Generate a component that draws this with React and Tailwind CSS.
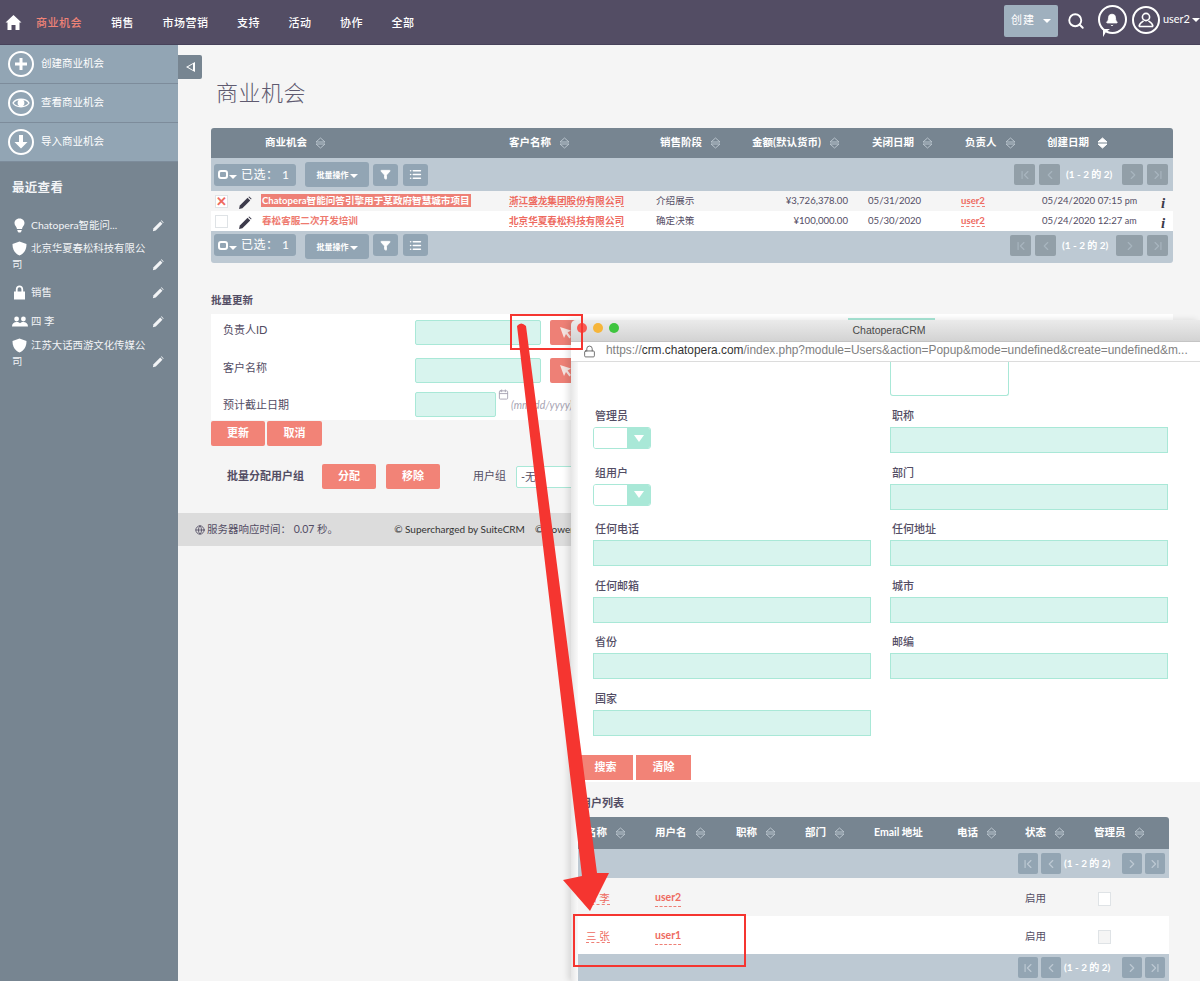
import { Search, Bell, Filter, List, ChevronLeft, ChevronRight, ChevronFirst, ChevronLast, Lock, Calendar, Globe } from 'lucide-react';

const NAV = ['销售', '市场营销', '支持', '活动', '协作', '全部'];

const COLS = 'grid grid-cols-[50px_248px_147px_80px_112px_113px_81px_118px_13px]';

function SortIcon({ active }) {
  return (
    <svg width="11" height="12" viewBox="0 0 11 12" className="inline-block shrink-0">
      <path d="M5.5 1 L10 5 H1 Z" fill={active ? '#fff' : 'none'} stroke={active ? '#fff' : '#b9c4cd'} strokeWidth="1" />
      <path d="M1 7 H10 L5.5 11 Z" fill={active ? '#fff' : 'none'} stroke={active ? '#fff' : '#b9c4cd'} strokeWidth="1" />
    </svg>
  );
}

function PencilIcon({ size = 14, color = '#3c3a4a' }) {
  return (
    <svg width={size} height={size} viewBox="0 0 14 14">
      <path d="M1 13 L1.8 9.6 L9.6 1.8 L12.2 4.4 L4.4 12.2 Z" fill={color} />
      <path d="M10.4 1 L11.2 0.4 L13.6 2.8 L13 3.6 Z" fill={color} />
    </svg>
  );
}

function CursorIcon() {
  return (
    <svg width="13" height="13" viewBox="0 0 13 13">
      <path d="M1 1 L12 4.5 L8.6 6.6 L12 11 L10.4 12.4 L7 8 L5 12 Z" fill="#f6e4e1" />
    </svg>
  );
}

function Caret({ className = '' }) {
  return <span className={`inline-block w-0 h-0 border-x-[4px] border-x-transparent border-t-[4px] border-t-white ${className}`} />;
}

function SideAction({ icon, label }) {
  return (
    <div className="h-[39px] flex items-center bg-[#92a5b4] border-b border-[#7d8c9b] pl-[8px]">
      <div className="w-[26px] h-[26px] rounded-full border-2 border-white flex items-center justify-center">
        {icon}
      </div>
      <span className="ml-[7px] text-[10.5px] text-white -mt-[1px]">{label}</span>
    </div>
  );
}

function Recent({ icon, label, wrap, className = '' }) {
  return (
    <div className={`relative text-[10.4px] leading-[16px] text-[#f2f4f6] pl-[12px] pr-[20px] ${className}`}>
      <div className="flex items-center h-[16px]">
        <span className="w-[19px] flex shrink-0">{icon}</span>
        <span className="whitespace-nowrap">{label}</span>
      </div>
      {wrap && <div>{wrap}</div>}
      <span className="absolute right-[14px] bottom-[1px]"><PencilIcon size={12} color="#f2f4f6" /></span>
    </div>
  );
}

const Shield = () => (
  <svg width="15" height="15" viewBox="0 0 15 15"><path d="M7.5 0.5 L14.5 3 C14.5 9 12 12.5 7.5 14.5 C3 12.5 0.5 9 0.5 3 Z" fill="#fff" /></svg>
);
const Bulb = () => (
  <svg width="13" height="15" viewBox="0 0 13 15" className="ml-[1px]"><path d="M6.5 0.5 C3 0.5 1.5 3 1.5 5 C1.5 7.5 3.6 8.5 4 11 H9 C9.4 8.5 11.5 7.5 11.5 5 C11.5 3 10 0.5 6.5 0.5 Z M4.4 12 H8.6 V13 L7.5 14.5 H5.5 L4.4 13 Z" fill="#fff" /></svg>
);
const LockSolid = () => (
  <svg width="13" height="15" viewBox="0 0 13 15" className="ml-[1px]"><path d="M1 6.5 H2.8 V4.5 C2.8 2 4.4 0.6 6.5 0.6 C8.6 0.6 10.2 2 10.2 4.5 V6.5 H12 V14.5 H1 Z M4.6 6.5 H8.4 V4.5 C8.4 3 7.6 2.2 6.5 2.2 C5.4 2.2 4.6 3 4.6 4.5 Z" fill="#fff" /></svg>
);
const People = () => (
  <svg width="16" height="11" viewBox="0 0 16 11"><circle cx="4.6" cy="3" r="2.4" fill="#fff" /><circle cx="11.4" cy="3" r="2.4" fill="#fff" /><path d="M0 10.5 C0 7.5 2 6 4.6 6 C6 6 7.2 6.4 8 7.2 C8.8 6.4 10 6 11.4 6 C14 6 16 7.5 16 10.5 Z" fill="#fff" /></svg>
);

function ToolBtn({ className = '', children }) {
  return <div className={`h-[22px] rounded-[3px] bg-[#92a5b4] flex items-center justify-center text-white ${className}`}>{children}</div>;
}

function PageBtn({ className = 'w-[21px]', children }) {
  return <div className={`h-[21px] rounded-[2px] bg-[#929fa8] flex items-center justify-center text-[#a8b5bf] ${className}`}>{children}</div>;
}

function Toolbar({ bottom }) {
  return (
    <div className={`flex bg-[#bdc9d3] pl-[3px] pr-[5px] ${bottom ? 'h-[32px] pt-[3px] items-start rounded-b-[3px]' : 'h-[33px] items-center'}`}>
      <ToolBtn className="w-[82px] text-[12px] gap-[4px] justify-start pl-[4px]">
        <span className="w-[10px] h-[9px] border-2 border-white rounded-[3px]" />
        <Caret className="-ml-[3px] mt-[5px]" />
        <span className="tracking-[0.5px] whitespace-nowrap">已选： 1</span>
      </ToolBtn>
      <ToolBtn className="!h-[25px] w-[64px] ml-[9px] text-[8px] gap-[1px] font-bold">批量操作<Caret className="mt-[2px]" /></ToolBtn>
      <ToolBtn className="w-[25px] ml-[4px]"><Filter size={11} fill="#fff" /></ToolBtn>
      <ToolBtn className="w-[25px] ml-[5px]"><List size={13} strokeWidth={3} /></ToolBtn>
      <div className={`ml-auto flex items-center ${bottom ? 'mt-[1px]' : ''}`}>
        <PageBtn><ChevronFirst size={14} /></PageBtn>
        <PageBtn className="w-[21px] ml-[4px]"><ChevronLeft size={14} /></PageBtn>
        <span className={`ml-[6px] w-[47px] text-[10px] font-bold text-white whitespace-nowrap ${bottom ? 'mr-[7px]' : 'mr-[9px]'}`}>(1 - 2 的 2)</span>
        <PageBtn className={bottom ? 'w-[27px]' : 'w-[21px]'}><ChevronRight size={14} /></PageBtn>
        <PageBtn className="w-[21px] ml-[4px]"><ChevronLast size={14} /></PageBtn>
      </div>
    </div>
  );
}

function Head({ label, className = '', active }) {
  return (
    <div className={`flex items-center gap-[8px] whitespace-nowrap ${className}`}>
      <span>{label}</span>
      <SortIcon active={active} />
    </div>
  );
}

function DataRow({ striped, checked, title, customer, stage, amount, closes, created, unit }) {
  return (
    <div className={`${COLS} h-[20px] items-center pt-[1px] text-[9.6px] text-[#534d64] ${striped ? 'bg-[#f5f5f5]' : 'bg-white'}`}>
      <div className="flex items-center pl-[4px]">
        <span className="w-[13px] h-[13px] border border-[#dfe3e6] bg-white flex items-center justify-center text-[#ee6a5f] text-[13px] font-bold leading-none">{checked ? '✕' : ''}</span>
        <span className="ml-[10px] mt-[3px]"><PencilIcon /></span>
      </div>
      <div className="whitespace-nowrap">
        {checked ? (
          <span className="bg-[#ee8076] text-white font-bold px-[1px] py-[1px]">{title}</span>
        ) : (
          <span className="text-[#ee7a6f] font-bold px-[1px]">{title}</span>
        )}
      </div>
      <div><span className="text-[#ee6a5f] font-bold border-b border-dashed border-[#ee8076]">{customer}</span></div>
      <div>{stage}</div>
      <div className="text-right">{amount}</div>
      <div className="pl-[20px]">{closes}</div>
      <div><span className="text-[#ee6a5f] font-bold border-b border-dashed border-[#ee8076]">user2</span></div>
      <div className="whitespace-nowrap">{created} <span className="text-[9px]">{unit}</span></div>
      <div className="pl-[1px] mt-[4px] text-[15px] font-bold italic leading-none text-[#3c3a4a] [font-family:'Liberation_Serif',serif]">i</div>
    </div>
  );
}

function FormField({ label }) {
  return (
    <div className="h-[56.6px]">
      <div className="pt-[1px] text-[11px] leading-[14px] font-medium text-[#534d64] pl-[2px]">{label}</div>
      <div className="mt-[4px] h-[26px] bg-[#d8f4ee] border border-[#a9e8d7]" />
    </div>
  );
}

function YesNo({ label }) {
  return (
    <div className="h-[56.6px]">
      <div className="pt-[1px] text-[11px] leading-[14px] font-medium text-[#534d64] pl-[2px]">{label}</div>
      <div className="mt-[4px] flex w-[58px] h-[22px] rounded-[3px] border border-[#a9e8d7] overflow-hidden">
        <div className="flex-1 bg-white" />
        <div className="w-[23px] bg-[#a9e8d7] flex items-center justify-center">
          <span className="w-0 h-0 border-x-[5px] border-x-transparent border-t-[7px] border-t-white" />
        </div>
      </div>
    </div>
  );
}

function PopupPager() {
  return (
    <div className="flex items-center justify-end h-full pr-[4px]">
      <PageBtn className="w-[20px] !bg-[#93a5b3] !text-[#bdc9d3]"><ChevronFirst size={14} /></PageBtn>
      <PageBtn className="w-[20px] ml-[3px] !bg-[#93a5b3] !text-[#bdc9d3]"><ChevronLeft size={14} /></PageBtn>
      <span className="ml-[3px] mr-[9px] w-[49px] text-[10px] font-bold text-white whitespace-nowrap">(1 - 2 的 2)</span>
      <PageBtn className="w-[20px] !bg-[#93a5b3] !text-[#bdc9d3]"><ChevronRight size={14} /></PageBtn>
      <PageBtn className="w-[20px] ml-[3px] !bg-[#93a5b3] !text-[#bdc9d3]"><ChevronLast size={14} /></PageBtn>
    </div>
  );
}

function UserRow({ name, user, striped, boxed }) {
  return (
    <div className={`h-[38px] flex items-center pt-[3px] text-[10.5px] ${striped ? 'bg-[#f5f5f5]' : 'bg-white'}`}>
      <span className="ml-[8px] w-[69px] text-[#ee6a5f]"><span className="border-b border-dashed border-[#ee8076]">{name}</span></span>
      <span className="text-[#ee6a5f] font-bold border-b border-dashed border-[#ee8076]">{user}</span>
      <span className="ml-auto w-[73px] text-[#534d64]">启用</span>
      <span className={`mr-[58px] w-[13px] h-[14px] border border-[#dfe3e6] ${boxed ? 'bg-[#f5f5f5]' : 'bg-white'}`} />
    </div>
  );
}

function PopupWindow() {
  return (
    <div className="absolute left-[571px] top-[320px] w-[629px] h-[661px] flex flex-col shadow-[-3px_0_6px_rgba(0,0,0,0.12)] rounded-tl-[5px] overflow-hidden">
      <div className="h-[22px] shrink-0 bg-gradient-to-b from-[#ebebeb] to-[#d3d3d3] border-b border-[#c4c4c4] relative flex items-center justify-center">
        <div className="absolute left-[6px] top-[3px] flex gap-[6px]">
          <span className="w-[10px] h-[10px] rounded-full bg-[#f85a52]" />
          <span className="w-[10px] h-[10px] rounded-full bg-[#f6b53a]" />
          <span className="w-[10px] h-[10px] rounded-full bg-[#3fc53f]" />
        </div>
        <span className="ml-[7px] text-[10.5px] text-[#4a4a4a] [font-family:'Liberation_Sans',sans-serif]">ChatoperaCRM</span>
      </div>
      <div className="h-[20px] shrink-0 bg-white border-b border-[#dcdcdc] flex items-center pl-[12px] pb-[1px] text-[11.9px] text-[#808080] whitespace-nowrap overflow-hidden [font-family:'Liberation_Sans',sans-serif]">
        <Lock size={13} strokeWidth={1.5} className="text-[#555] shrink-0" />
        <span className="ml-[10px]">https://<span className="text-[#333]">crm.chatopera.com</span>/index.php?module=Users&amp;action=Popup&amp;mode=undefined&amp;create=undefined&amp;m...</span>
      </div>
      <div className="flex-1 flex min-h-0">
        <div className="w-[7px] shrink-0 bg-gradient-to-r from-[#e6e6e6] to-[#fafafa]" />
        <div className="flex-1 flex flex-col min-w-0">
          <div className="h-[420px] shrink-0 bg-white pl-[15px] pr-[32px]">
            <div className="h-[34px] ml-[297px] w-[119px] border border-t-0 border-[#a9e8d7] rounded-b-[3px]" />
            <div className="grid grid-cols-[278px_278px] gap-x-[19px] mt-[12px]">
              <YesNo label="管理员" />
              <FormField label="职称" />
              <YesNo label="组用户" />
              <FormField label="部门" />
              <FormField label="任何电话" />
              <FormField label="任何地址" />
              <FormField label="任何邮箱" />
              <FormField label="城市" />
              <FormField label="省份" />
              <FormField label="邮编" />
              <FormField label="国家" />
            </div>
            <div className="flex gap-[3px] -ml-[15px] mt-[7px]">
              <button className="w-[55px] h-[25px] bg-[#f28377] text-white text-[11px] font-bold">搜索</button>
              <button className="w-[55px] h-[25px] bg-[#f28377] text-white text-[11px] font-bold">清除</button>
            </div>
          </div>
          <div className="flex-1 bg-[#f5f5f5] pr-[31px]">
            <div className="h-[35px] pt-[14px] pl-[2px] text-[11px] leading-[14px] font-bold text-[#534d64]">用户列表</div>
            <div className="h-[32px] bg-[#778591] rounded-t-[3px] text-white text-[10.5px] font-bold relative flex items-center">
              <Head label="名称" className="ml-[8px] w-[69px]" />
              <Head label="用户名" className="w-[81px]" />
              <Head label="职称" className="w-[69px]" />
              <Head label="部门" className="w-[69px]" />
              <span className="w-[83px] whitespace-nowrap">Email 地址</span>
              <Head label="电话" className="w-[68px]" />
              <Head label="状态" className="w-[69px]" />
              <Head label="管理员" />
            </div>
            <div className="h-[29px] bg-[#bdc9d3]"><PopupPager /></div>
            <UserRow name="四 李" user="user2" striped />
            <UserRow name="三 张" user="user1" boxed />
            <div className="h-[27px] bg-[#bdc9d3]"><PopupPager /></div>
          </div>
        </div>
      </div>
    </div>
  );
}

function Annotations() {
  return (
    <>
      <svg width="1200" height="981" viewBox="0 0 1200 981" className="absolute left-0 top-0 pointer-events-none">
        <path d="M517 326 Q521 321 526 326 L597 873 L609 873 L590 911 L563 880 L582 876 Z" fill="#f53530" />
      </svg>
      <div className="absolute left-[510px] top-[314px] w-[73px] h-[36px] border-2 border-[#f53530] pointer-events-none" />
      <div className="absolute left-[573px] top-[914px] w-[173px] h-[53px] border-2 border-[#f53530] pointer-events-none" />
    </>
  );
}

export default function App() {
  return (
    <div className="relative w-[1200px] h-[981px] overflow-hidden bg-[#f5f5f5] [font-family:Lato,'Noto_Sans_CJK_SC',sans-serif]">
      {/* Top nav */}
      <header className="h-[45px] bg-[#534d64] border-b border-[#47425a] flex items-center text-white">
        <svg width="17" height="17" viewBox="0 0 17 17" className="ml-[5px] mt-[1px]">
          <path d="M8.5 1 L16.5 8.6 L14.5 8.6 L14.5 16 L10.5 16 L10.5 11 L6.5 11 L6.5 16 L2.5 16 L2.5 8.6 L0.5 8.6 Z" fill="#fff" />
        </svg>
        <nav className="ml-[14px] mt-[3px] flex gap-[28.5px] text-[11px] tracking-[0.5px] font-medium">
          <span className="text-[#f08377] mr-[0.5px]">商业机会</span>
          {NAV.map((item) => <span key={item}>{item}</span>)}
        </nav>
        <div className="ml-auto flex items-center">
          <div className="w-[54px] h-[32px] -mt-[3px] bg-[#9fb0be] rounded-[2px] flex items-center justify-center gap-[8px] text-[11px] tracking-[1px]">
            创建 <Caret />
          </div>
          <Search size={18} strokeWidth={2.5} className="ml-[9px] -mt-[3px]" />
          <div className="relative ml-[13px] -mt-[5px] w-[29px] h-[29px] rounded-full border-2 border-white flex items-center justify-center">
            <Bell size={14} fill="#fff" strokeWidth={1.5} />
            <span className="absolute left-[3px] -bottom-[5px] w-0 h-0 border-l-[3px] border-l-white border-b-[5px] border-b-transparent border-t-[3px] border-t-white border-r-[4px] border-r-transparent" />
          </div>
          <div className="ml-[5px] -mt-[5px] w-[28px] h-[28px] rounded-full border-2 border-white flex items-center justify-center">
            <svg width="18" height="18" viewBox="0 0 18 18" fill="none" stroke="#fff" strokeWidth="1.6">
              <circle cx="9" cy="6" r="3.6" />
              <path d="M2 15.5 C2.5 12 5 11 6.5 10 M16 15.5 C15.5 12 13 11 11.5 10 M2 15.5 H16" />
            </svg>
          </div>
          <span className="ml-[3px] -mt-[6px] text-[11px]">user2</span>
          <Caret className="ml-[2px] -mt-[5px]" />
        </div>
      </header>

      <div className="flex h-[936px]">
        {/* Sidebar */}
        <aside className="w-[178px] shrink-0 bg-[#778591] flex flex-col">
          <SideAction label="创建商业机会" icon={<svg width="14" height="14" viewBox="0 0 14 14"><path d="M5.5 1 H8.5 V5.5 H13 V8.5 H8.5 V13 H5.5 V8.5 H1 V5.5 H5.5 Z" fill="#fff" /></svg>} />
          <SideAction label="查看商业机会" icon={<svg width="18" height="12" viewBox="0 0 18 12"><path d="M1 6 C4 1 14 1 17 6 C14 11 4 11 1 6 Z" fill="none" stroke="#fff" strokeWidth="1.3" /><circle cx="9" cy="6" r="3.4" fill="#fff" /></svg>} />
          <SideAction label="导入商业机会" icon={<svg width="14" height="14" viewBox="0 0 14 14"><path d="M5 0 H9 V7 H13.5 L7 13.5 L0.5 7 H5 Z" fill="#fff" /></svg>} />
          <h3 className="mt-[18px] ml-[12px] text-[12.5px] leading-[16px] font-bold text-[#f2f4f6] tracking-[0.3px]">最近查看</h3>
          <Recent className="mt-[21px]" icon={<Bulb />} label="Chatopera智能问..." />
          <Recent className="mt-[7px]" icon={<Shield />} label="北京华夏春松科技有限公" wrap="司" />
          <Recent className="mt-[12px]" icon={<LockSolid />} label="销售" />
          <Recent className="mt-[13px]" icon={<People />} label="四 李" />
          <Recent className="mt-[8px]" icon={<Shield />} label="江苏大话西游文化传媒公" wrap="司" />
        </aside>

        {/* Main */}
        <main className="flex-1 min-w-0 relative">
          <div className="absolute left-0 top-[10px] w-[24px] h-[24px] bg-[#778591] rounded-r-[2px] flex items-center justify-center">
            <span className="w-0 h-0 relative border-y-[5px] border-y-transparent border-r-[9px] border-r-white after:content-[''] after:absolute after:left-[2px] after:-top-[3px] after:border-y-[3px] after:border-y-transparent after:border-r-[5px] after:border-r-[#778591]" />
          </div>

          <h1 className="pl-[38px] pt-[34px] text-[22px] leading-[28px] font-light text-[#5f5a70] tracking-[0.5px]">商业机会</h1>

          <div className="ml-[33px] mt-[21px] w-[962px]">
            <div className={`${COLS} h-[30px] items-center bg-[#778591] rounded-t-[3px] text-white text-[10.5px] font-bold`}>
              <div />
              <Head label="商业机会" className="pl-[4px]" />
              <Head label="客户名称" />
              <Head label="销售阶段" className="pl-[4px]" />
              <Head label="金额(默认货币)" className="pl-[16px]" />
              <Head label="关闭日期" className="pl-[24px]" />
              <Head label="负责人" className="pl-[4px]" />
              <Head label="创建日期" className="pl-[5px]" active />
              <div />
            </div>
            <Toolbar />
            <DataRow striped checked title="Chatopera智能问答引擎用于某政府智慧城市项目" customer="浙江盛龙集团股份有限公司" stage="介绍展示" amount="¥3,726,378.00" closes="05/31/2020" created="05/24/2020 07:15" unit="pm" />
            <DataRow title="春松客服二次开发培训" customer="北京华夏春松科技有限公司" stage="确定决策" amount="¥100,000.00" closes="05/30/2020" created="05/24/2020 12:27" unit="am" />
            <Toolbar bottom />
          </div>

          <div className="ml-[33px] mt-[30px] text-[10.5px] leading-[14px] font-bold text-[#534d64]">批量更新</div>
          <div className="ml-[33px] mt-[7px] w-[962px] h-[106px] bg-white relative pt-[6px] pl-[12px] text-[11px] text-[#534d64]">
            <div className="flex h-[38px]">
              <span className="w-[192px] leading-[20px]">负责人ID</span>
              <div className="w-[126px] h-[25px] bg-[#d8f4ee] border border-[#a9e8d7] rounded-[2px]" />
              <div className="ml-[9px] w-[30px] h-[25px] bg-[#ee8076] rounded-[2px] flex items-center justify-center"><CursorIcon /></div>
              <div className="ml-[268px] -mt-[2px] w-[87px] h-[2px] bg-[#a9e8d7]" />
            </div>
            <div className="flex h-[34px]">
              <span className="w-[192px] leading-[20px]">客户名称</span>
              <div className="w-[126px] h-[25px] bg-[#d8f4ee] border border-[#a9e8d7] rounded-[2px]" />
              <div className="ml-[9px] w-[30px] h-[25px] bg-[#ee8076] rounded-[2px] flex items-center justify-center"><CursorIcon /></div>
            </div>
            <div className="flex h-[26px]">
              <span className="w-[192px] leading-[26px]">预计截止日期</span>
              <div className="w-[81px] h-[25px] bg-[#d8f4ee] border border-[#a9e8d7] rounded-[2px]" />
              <div className="ml-[2px] -mt-[3px]">
                <Calendar size={11} className="text-[#a6a3b2]" />
                <span className="block ml-[13px] -mt-[2px] text-[10.5px] italic text-[#a6a3b2] whitespace-nowrap">(mm/dd/yyyy)</span>
              </div>
            </div>
          </div>
          <div className="ml-[33px] mt-[1px] flex gap-[2px]">
            <button className="w-[54px] h-[25px] rounded-[2px] bg-[#f28377] text-white text-[11px] font-bold">更新</button>
            <button className="w-[55px] h-[25px] rounded-[2px] bg-[#f28377] text-white text-[11px] font-bold">取消</button>
          </div>
          <div className="ml-[49px] mt-[18px] flex items-center h-[25px] text-[#534d64]">
            <span className="w-[95px] text-[11px] font-bold whitespace-nowrap">批量分配用户组</span>
            <button className="w-[54px] h-[25px] rounded-[2px] bg-[#f28377] text-white text-[11px] font-bold">分配</button>
            <button className="ml-[10px] w-[54px] h-[25px] rounded-[2px] bg-[#f28377] text-white text-[11px] font-bold">移除</button>
            <span className="ml-[33px] text-[11px]">用户组</span>
            <div className="ml-[10px] w-[80px] h-[22px] bg-white border border-[#a9e8d7] rounded-[2px] pl-[4px] text-[11px] leading-[20px]">-无-</div>
          </div>
          <footer className="mt-[24px] h-[33px] bg-[#dcdcdc] flex items-center text-[#534d64] text-[10.5px]">
            <Globe size={10} className="ml-[17px] text-[#534d64]" />
            <span className="ml-[2px]">服务器响应时间： 0.07 秒。</span>
            <span className="ml-[56px] text-[10px] text-[#333]">© Supercharged by SuiteCRM</span>
            <span className="ml-[10px] text-[10px] text-[#333]">© Powered by SugarCRM</span>
          </footer>
        </main>
      </div>

      <PopupWindow />
      <Annotations />
    </div>
  );
}
